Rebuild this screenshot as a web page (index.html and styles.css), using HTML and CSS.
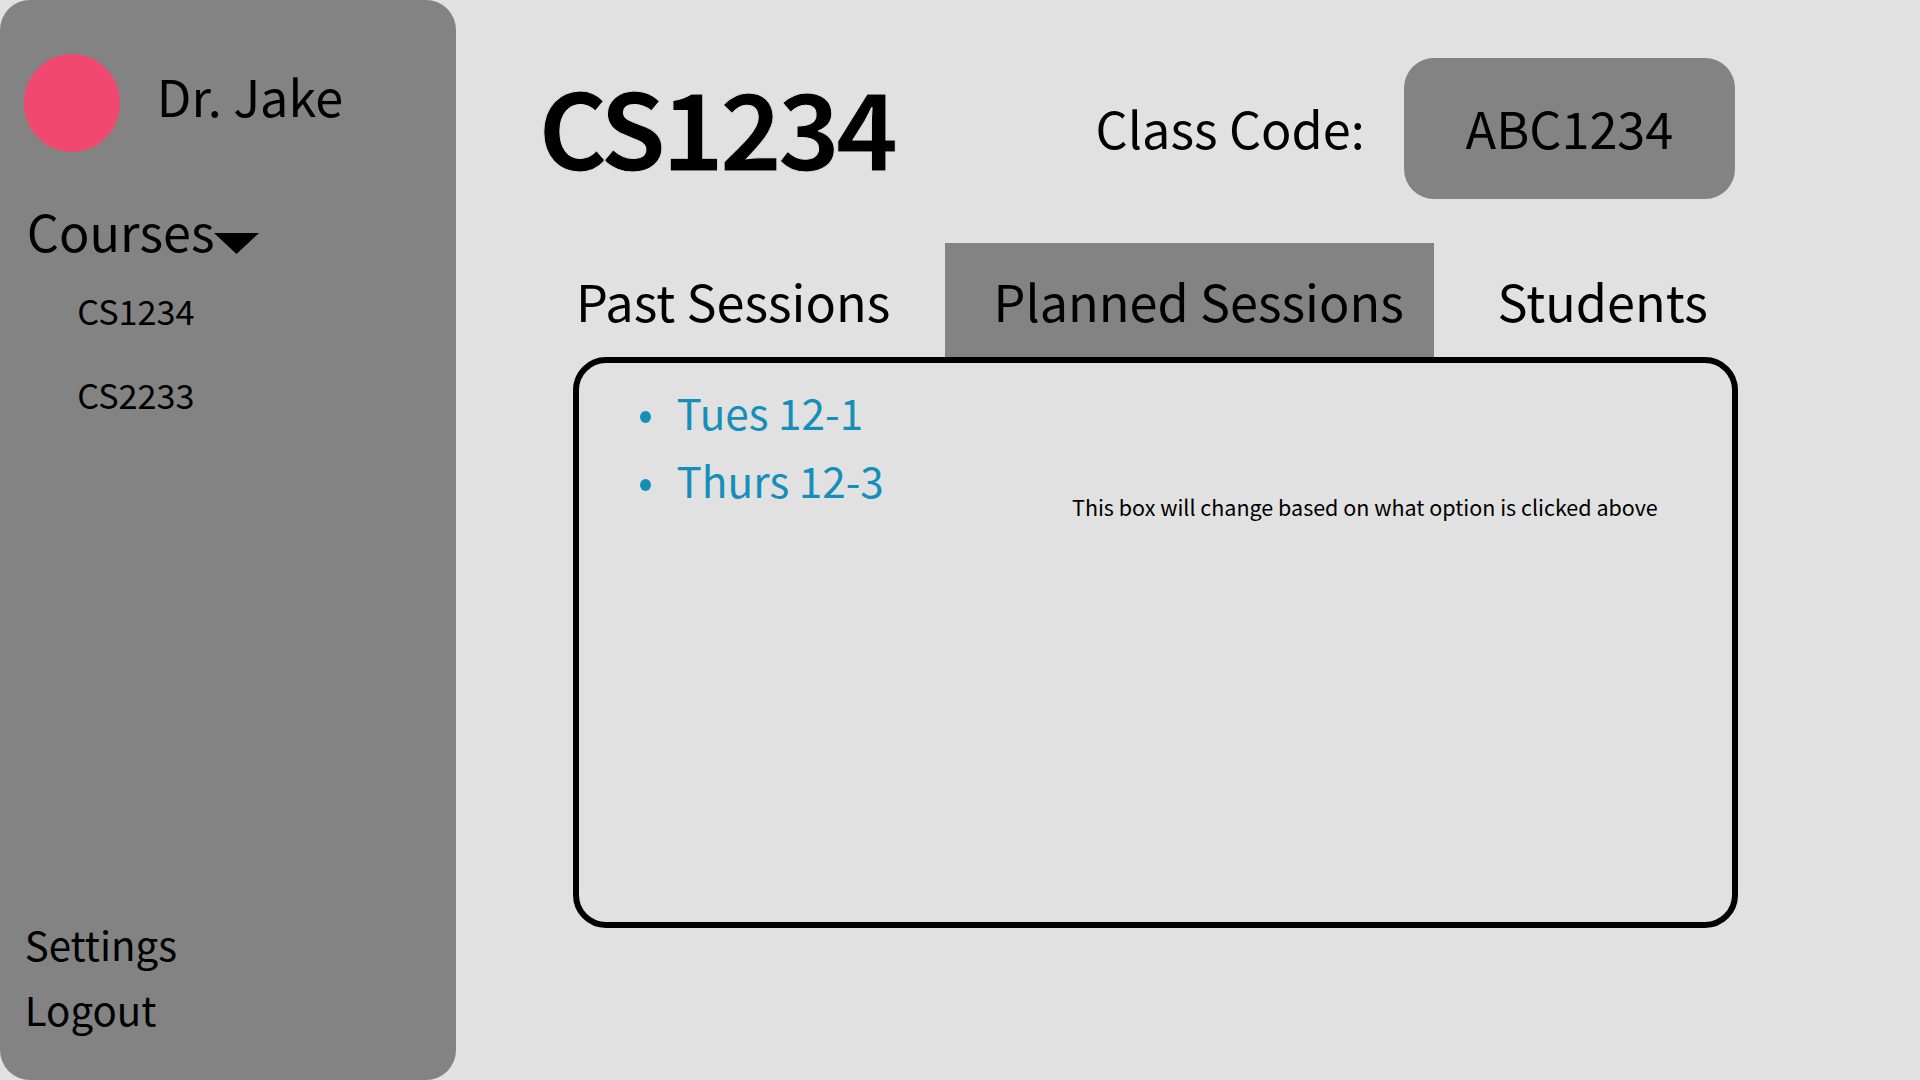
FILE: index.html
```html
<!DOCTYPE html>
<html lang="en">
<head>
<meta charset="utf-8">
<title>CS1234</title>
<link rel="stylesheet" href="styles.css">
</head>
<body>
<div class="app">
  <aside class="sidebar">
    <div class="profile">
      <div class="avatar"></div>
      <span class="name">Dr. Jake</span>
    </div>
    <div class="courses-head"><span class="courses-label">Courses</span><svg class="caret" viewBox="0 0 45 21"><path d="M0 0H45L22.5 21Z"/></svg></div>
    <nav class="courses">
      <a class="course">CS1234</a>
      <a class="course">CS2233</a>
    </nav>
    <nav class="links">
      <a class="link">Settings</a>
      <a class="link">Logout</a>
    </nav>
  </aside>
  <main class="main">
    <header class="header">
      <h1 class="title">CS1234</h1>
      <span class="code-label">Class Code:</span>
      <span class="code">ABC1234</span>
    </header>
    <nav class="tabs">
      <a class="tab past">Past Sessions</a>
      <a class="tab planned">Planned Sessions</a>
      <a class="tab students">Students</a>
    </nav>
    <section class="panel">
      <ul class="sessions">
        <li class="session">Tues 12-1</li>
        <li class="session">Thurs 12-3</li>
      </ul>
      <p class="note">This box will change based on what option is clicked above</p>
    </section>
  </main>
</div>
</body>
</html>
```
FILE: styles.css
```css
* { box-sizing: border-box; margin: 0; padding: 0; }
body { width: 1920px; height: 1080px; overflow: hidden; background: #e1e1e1; color: #000; font-family: "Noto Sans CJK SC", sans-serif; }
.app { display: flex; height: 1080px; white-space: nowrap; }
.sidebar { display: flex; flex: none; flex-direction: column; width: 455.5px; background: #838383; border-radius: 30px; padding: 54px 24.3px 39.5px; }
.profile { display: flex; height: 98px; }
.avatar { flex: none; width: 96px; height: 98px; border-radius: 50%; background: #f1486f; }
.name { font-size: 50.4px; line-height: 80px; margin: 2.3px 0 0 36.5px; }
.courses-head { display: flex; font-size: 50.4px; line-height: 80px; margin: 39px 0 0 2.5px; }
.courses-label { width: 187.5px; }
.caret { width: 45px; height: 21px; margin-top: 41.5px; }
.courses { margin: -3.5px 0 0 53px; }
.course { display: block; font-size: 34.2px; line-height: 84px; }
.links { margin: auto 0 0 0.5px; }
.link { display: block; font-size: 40.2px; line-height: 65px; }
.main { flex: none; width: 1464.5px; padding-top: 58.4px; }
.header { display: flex; height: 140.4px; align-items: center; }
.title { flex: none; font-size: 106.5px; line-height: 134px; width: 557.6px; margin: 0 0 7px 82.5px; letter-spacing: -4.8px; -webkit-text-stroke: 1px #e1e1e1; }
.code-label { flex: none; font-size: 50.4px; line-height: 80px; width: 308.1px; margin-bottom: 2px; }
.code { flex: none; font-size: 50.4px; width: 331.5px; height: 140.4px; line-height: 139.6px; text-align: center; border-radius: 30px; background: #838383; }
.tabs { display: flex; height: 114px; margin-top: 44.2px; font-size: 50.4px; line-height: 116px; }
.tab { flex: none; }
.past { width: 369.6px; margin-left: 120.4px; }
.planned { width: 488.7px; padding-left: 48px; background: #838383; }
.students { margin-left: 63.4px; }
.panel { display: flex; width: 1165px; height: 571px; margin-left: 117.5px; border: 6px solid #000; border-radius: 33px; padding-top: 15px; }
.sessions { flex: none; list-style: none; width: 493px; padding-left: 61px; }
.session { display: flex; align-items: center; font-size: 42.3px; line-height: 68.2px; color: #158fb9; }
.session::before { content: ""; width: 11px; height: 12px; margin: 10px 25.5px 0 0; border-radius: 50%; background: #158fb9; }
.note { font-size: 21.5px; line-height: 34px; margin-top: 111.6px; }
```
